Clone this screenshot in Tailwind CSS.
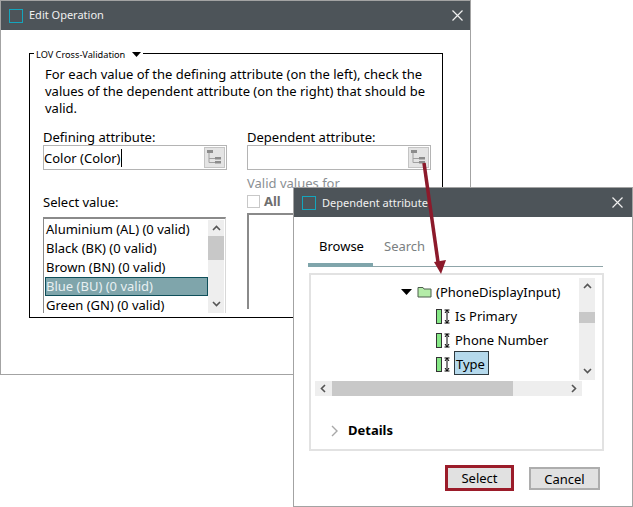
<!DOCTYPE html>
<html lang="en">
<head>
<meta charset="UTF-8">
<title>Edit Operation</title>
<script src="https://cdn.jsdelivr.net/npm/@tailwindcss/browser@4"></script>
</head>
<body class="relative w-[633px] h-[507px] overflow-hidden bg-white text-[13px] leading-[17px] text-black font-['Noto_Sans','Liberation_Sans',sans-serif]">

<!-- Edit Operation window -->
<div class="absolute left-0 top-0 w-[471px] h-[375px] border border-[#a3a3a3] bg-white">
  <div class="flex items-center h-[29px] bg-[#4d5459] text-[#f0f0f0] text-[11px]">
    <span class="ml-[8px] mr-[6px] w-[14px] h-[14px] border border-[#14a5bd]"></span>
    <span class="pb-[2px]">Edit Operation</span>
    <svg class="ml-auto mr-[6px]" width="13" height="13" viewBox="0 0 13 13"><path d="M1.500 1.500l10 10M11.500 1.500l-10 10" stroke="#f0f0f0" stroke-width="1.200" fill="none"/></svg>
  </div>
  <div class="relative ml-[28px] mt-[23px] w-[414px] h-[265px] border border-black pt-[12px]">
    <div class="absolute left-[4px] -top-[6px] flex items-center gap-[7px] bg-white px-[2px] text-[9.200px] leading-[13px]">
      <span>LOV Cross-Validation</span>
      <svg width="9" height="5" viewBox="0 0 9 5"><path d="M0 0h9L4.500 5z" fill="#000"/></svg>
    </div>
    <p class="ml-[15px] w-[390px]">For each value of the defining attribute (on the left), check the values of the dependent attribute (on the right) that should be valid.</p>
    <div class="grid grid-cols-[184px_184px] gap-x-[20px] ml-[13px] mt-[12px]">
      <div>
        <div class="leading-[16px]">Defining attribute:</div>
        <div class="flex items-center h-[25px] border border-[#b4b4b4] pr-[1px]">
          <span class="border-r border-black leading-[18px]">Color (Color)</span>
          <span class="ml-auto flex items-center justify-center w-[21px] h-[21px] border border-[#c4c4c4] bg-[#e4e4e4]">
            <svg width="17" height="17" viewBox="0 0 17 17"><path d="M1 1h6v3H1zM9 8h6v2.500H9zM9 12h6v2.500H9z" fill="#8c8c8c"/><path d="M3 4v9.500h6M3 9.500h6" stroke="#a0a0a0" fill="none"/></svg>
          </span>
        </div>
        <div class="mt-[24px]">Select value:</div>
        <div class="flex mt-[6px] h-[96px] w-[183px] border-t-2 border-l border-[#8a8a8a] border-r border-r-[#d8d8d8] pt-[1px]">
          <ul class="flex-1 pl-[1px]">
            <li class="h-[19px] pl-[1px] leading-[18px]">Aluminium (AL) (0 valid)</li>
            <li class="h-[19px] pl-[1px] leading-[18px]">Black (BK) (0 valid)</li>
            <li class="h-[19px] pl-[1px] leading-[18px]">Brown (BN) (0 valid)</li>
            <li class="h-[19px] leading-[17px] bg-[#7fa5ab] border border-[#0f4f5a] text-[#e8f0f2]">Blue (BU) (0 valid)</li>
            <li class="h-[19px] pl-[1px] leading-[18px]">Green (GN) (0 valid)</li>
          </ul>
          <div class="flex flex-col items-center w-[16px] bg-[#eeeeee] mr-[1px]">
            <svg class="my-[5px]" width="9" height="6" viewBox="0 0 9 6"><path d="M1 5l3.500-3.500L8 5" stroke="#555" stroke-width="1.600" fill="none"/></svg>
            <div class="w-full h-[24px] bg-[#c8c8c8]"></div>
            <svg class="mt-auto mb-[6px]" width="9" height="6" viewBox="0 0 9 6"><path d="M1 1l3.500 3.500L8 1" stroke="#555" stroke-width="1.600" fill="none"/></svg>
          </div>
        </div>
      </div>
      <div>
        <div class="leading-[16px]">Dependent attribute:</div>
        <div class="flex items-center h-[25px] border border-[#b4b4b4] pr-[1px]">
          <span class="ml-auto flex items-center justify-center w-[21px] h-[21px] border border-[#c4c4c4] bg-[#e4e4e4]">
            <svg width="17" height="17" viewBox="0 0 17 17"><path d="M1 1h6v3H1zM9 8h6v2.500H9zM9 12h6v2.500H9z" fill="#8c8c8c"/><path d="M3 4v9.500h6M3 9.500h6" stroke="#a0a0a0" fill="none"/></svg>
          </span>
        </div>
        <div class="mt-[5px] text-[#8a8f93]">Valid values for</div>
        <div class="flex items-center gap-[4px] mt-[2px] h-[14px] text-[#6e6e6e] font-bold">
          <span class="w-[13px] h-[13px] border border-[#c8c8c8] bg-white"></span>
          <span>All</span>
        </div>
        <div class="mt-[5px] h-[96px] w-[183px] border-t-2 border-l-2 border-[#8a8a8a]"></div>
      </div>
    </div>
  </div>
</div>

<!-- Dependent attribute window -->
<div class="absolute left-[293px] top-[187px] w-[340px] h-[320px] border border-[#a3a3a3] bg-white">
  <div class="flex items-center h-[29px] bg-[#4d5459] text-[#f0f0f0] text-[11px]">
    <span class="ml-[8px] mr-[6px] w-[14px] h-[14px] border border-[#14a5bd]"></span>
    <span>Dependent attribute</span>
    <svg class="ml-auto mr-[8px]" width="13" height="13" viewBox="0 0 13 13"><path d="M1.500 1.500l10 10M11.500 1.500l-10 10" stroke="#f0f0f0" stroke-width="1.200" fill="none"/></svg>
  </div>
  <div class="ml-[14px] mr-[29px] mt-[20px] flex border-b border-[#8fa5a9] h-[30px] pt-[1px]">
    <div class="w-[65px] pl-[11px] h-[29px] border-b-4 border-[#7fa5ab]">Browse</div>
    <div class="ml-[11px] text-[#7b7f82]">Search</div>
  </div>
  <div class="ml-[15px] mt-[6px] w-[295px] h-[178px] border-2 border-[#e2e2e2] relative">
    <div class="flex h-[118px]">
      <div class="w-[268px] overflow-hidden pl-[90px] pt-[5px]">
        <div class="flex items-center h-[24px]">
          <svg width="11" height="6" viewBox="0 0 11 6"><path d="M0 0h11L5.500 6z" fill="#000"/></svg>
          <svg class="ml-[5px]" width="15" height="12" viewBox="0 0 15 12"><path d="M1 3V1.500h5L7 3h7v8H1z" fill="#b4eca8" stroke="#4d5f4d"/></svg>
          <span class="ml-[4px]">(PhoneDisplayInput)</span>
        </div>
        <div class="flex items-center h-[24px] pl-[35px]">
          <svg width="17" height="15" viewBox="0 0 17 15"><rect x="0.500" y="0.500" width="5" height="14" fill="#86e886" stroke="#333"/><path d="M11 1v13M8.500 1h5M8.500 14h5M9 4l2-3 2 3M9 11l2 3 2-3" stroke="#000" fill="none"/></svg>
          <span class="ml-[2px]">Is Primary</span>
        </div>
        <div class="flex items-center h-[24px] pl-[35px]">
          <svg width="17" height="15" viewBox="0 0 17 15"><rect x="0.500" y="0.500" width="5" height="14" fill="#86e886" stroke="#333"/><path d="M11 1v13M8.500 1h5M8.500 14h5M9 4l2-3 2 3M9 11l2 3 2-3" stroke="#000" fill="none"/></svg>
          <span class="ml-[2px]">Phone Number</span>
        </div>
        <div class="flex items-center h-[24px] pl-[35px]">
          <svg width="17" height="15" viewBox="0 0 17 15"><rect x="0.500" y="0.500" width="5" height="14" fill="#86e886" stroke="#333"/><path d="M11 1v13M8.500 1h5M8.500 14h5M9 4l2-3 2 3M9 11l2 3 2-3" stroke="#000" fill="none"/></svg>
          <span class="relative -top-[1px] ml-[1px] pl-[1px] pr-[3px] h-[24px] leading-[24px] bg-[#b5d9ec] border border-[#2e3a40]">Type</span>
        </div>
        <div class="flex items-center h-[24px] pl-[35px]">
          <svg width="17" height="15" viewBox="0 0 17 15"><path d="M1 .5h4M9 .5h5" stroke="#8c8c8c" fill="none"/></svg>
        </div>
      </div>
      <div class="flex flex-col items-center w-[16px] bg-[#eeeeee] mt-[3px] h-[102px]">
        <svg class="my-[5px]" width="9" height="6" viewBox="0 0 9 6"><path d="M1 5l3.500-3.500L8 5" stroke="#555" stroke-width="1.600" fill="none"/></svg>
        <div class="w-full h-[11px] mt-[18px] bg-[#c8c8c8]"></div>
        <svg class="mt-auto mb-[6px]" width="9" height="6" viewBox="0 0 9 6"><path d="M1 1l3.500 3.500L8 1" stroke="#555" stroke-width="1.600" fill="none"/></svg>
      </div>
    </div>
    <div class="flex items-center ml-[4px] -mt-[12px] w-[267px] h-[15px] bg-[#eeeeee] relative">
      <svg class="ml-[5px]" width="6" height="9" viewBox="0 0 6 9"><path d="M5 1L1.500 4.500 5 8" stroke="#555" stroke-width="1.600" fill="none"/></svg>
      <div class="ml-[6px] w-[181px] h-full bg-[#c8c8c8]"></div>
      <svg class="ml-auto mr-[5px]" width="6" height="9" viewBox="0 0 6 9"><path d="M1 1l3.500 3.500L1 8" stroke="#555" stroke-width="1.600" fill="none"/></svg>
    </div>
    <div class="flex items-center ml-[20px] mt-[26px] font-bold">
      <svg width="7" height="12" viewBox="0 0 7 12"><path d="M1 1l5 5-5 5" stroke="#a8a8a8" stroke-width="1.400" fill="none"/></svg>
      <span class="ml-[10px]">Details</span>
    </div>
  </div>
  <div class="flex items-center justify-end gap-[15px] mr-[32px] mt-[14px]">
    <button class="w-[69px] h-[26px] border-[3px] border-[#9b1c2a] bg-[#e1e1e1] pt-[1px]">Select</button>
    <button class="w-[71px] h-[23px] border-2 border-[#adadad] bg-[#e1e1e1] mt-[1px] pt-[1px]">Cancel</button>
  </div>
</div>

<!-- Callout arrow -->
<svg class="absolute left-0 top-0 pointer-events-none" width="633" height="507" viewBox="0 0 633 507">
  <path d="M424 163L438 262" stroke="#8c1a2b" stroke-width="3.500" fill="none"/>
  <path d="M434 262L446 260L441 274z" fill="#8c1a2b"/>
</svg>
</body>
</html>
